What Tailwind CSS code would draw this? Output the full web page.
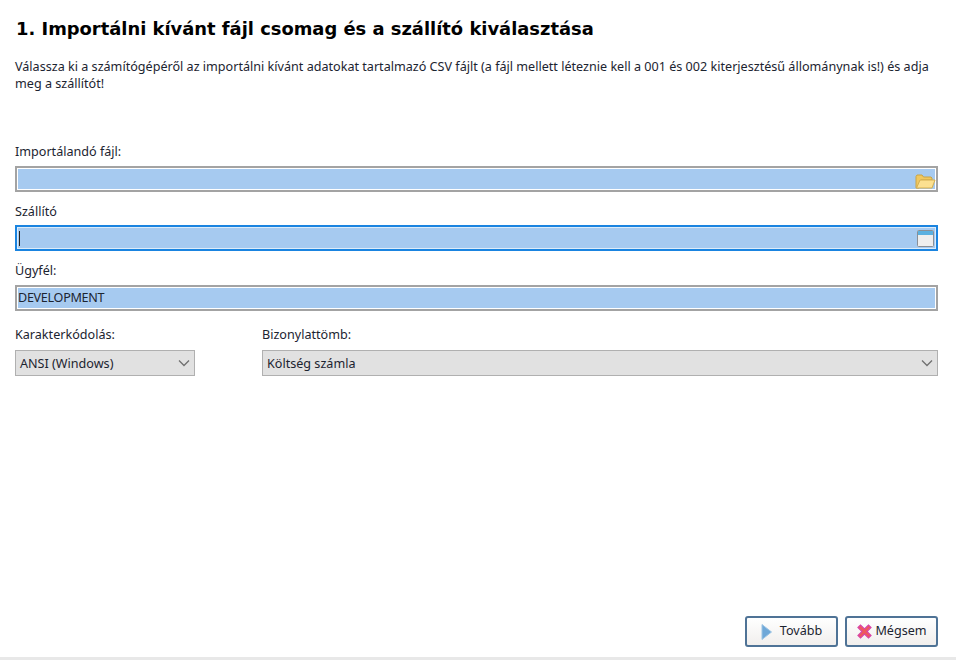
<!DOCTYPE html>
<html lang="hu">
<head>
    <meta charset="UTF-8">
    <title>Import</title>
    <script src="https://cdn.jsdelivr.net/npm/@tailwindcss/browser@4"></script>
</head>
<body class="w-[956px] h-[660px] overflow-hidden bg-white font-['Noto_Sans',sans-serif] text-[12.6px] text-[#1c2430]">
    <div class="h-[657px] flex flex-col pl-[15px] pr-[18px]">
        <h1 class="mt-[17px] ml-[1px] h-[24px] leading-[24px] font-['DejaVu_Sans',sans-serif] font-bold text-[17.9px] text-black whitespace-nowrap">1. Importálni kívánt fájl csomag és a szállító kiválasztása</h1>
        <p class="mt-[17px] w-[923px] leading-[17px]">Válassza ki a számítógépéről az importálni kívánt adatokat tartalmazó CSV fájlt (a fájl mellett léteznie kell a 001 és 002 kiterjesztésű állománynak is!) és adja meg a szállítót!</p>

        <label class="mt-[50px] h-[17px] pt-px leading-[17px]">Importálandó fájl:</label>
        <div class="mt-[7px] w-[923px] h-[26px] flex items-end justify-end border-2 border-[#a3a3a3] bg-[#a6caf0] shadow-[inset_0_0_0_1px_#fff] pb-[1px]">
            <svg width="21" height="15" viewBox="0 0 21 15">
                <path d="M1 14V2.500L2 1h5l1.500 2H16l1 1v2H6L4 14z" fill="#f0c860" stroke="#c9a445"/>
                <path d="M1.500 14L5 6h15l-3 8z" fill="#fbe090" stroke="#d4ae50"/>
            </svg>
        </div>
        <label class="mt-[11px] h-[17px] leading-[17px]">Szállító</label>
        <div class="mt-[5px] w-[923px] h-[26px] flex items-center justify-between border-2 border-[#1a84e0] bg-[#a6caf0] shadow-[inset_0_0_0_1px_#dcecfa] pl-[2px] pr-[2px]">
            <span class="w-px h-[15px] bg-[#222]"></span>
            <svg width="17" height="17" viewBox="0 0 17 17">
                <rect x="0.500" y="0.500" width="16" height="16" rx="1" fill="#eeeeee" stroke="#8a8f96"/>
                <rect x="1" y="1" width="15" height="4" fill="#5ab0e0"/>
            </svg>
        </div>
        <label class="mt-[11px] h-[17px] leading-[17px]">Ügyfél:</label>
        <div class="mt-[6px] w-[923px] h-[26px] flex items-center border-2 border-[#a3a3a3] bg-[#a6caf0] shadow-[inset_0_0_0_1px_#fff] pl-[1px] tracking-[-0.3px]">DEVELOPMENT</div>

        <div class="mt-[15px] flex gap-[67px]">
            <div class="w-[180px]">
                <label class="block h-[17px] leading-[17px]">Karakterkódolás:</label>
                <div class="mt-[7px] h-[26px] flex items-center justify-between border border-[#b0b0b0] bg-[#e1e1e1] pl-[4px] pr-[4px]">
                    <span class="pt-[2px]">ANSI (Windows)</span>
                    <svg width="12" height="8" viewBox="0 0 12 8"><path d="M1 1.500l5 5 5-5" fill="none" stroke="#707070" stroke-width="1.300"/></svg>
                </div>
            </div>
            <div class="w-[676px]">
                <label class="block h-[17px] leading-[17px]">Bizonylattömb:</label>
                <div class="mt-[7px] h-[26px] flex items-center justify-between border border-[#b0b0b0] bg-[#e1e1e1] pl-[4px] pr-[4px]">
                    <span class="pt-[2px]">Költség számla</span>
                    <svg width="12" height="8" viewBox="0 0 12 8"><path d="M1 1.500l5 5 5-5" fill="none" stroke="#707070" stroke-width="1.300"/></svg>
                </div>
            </div>
        </div>

        <div class="mt-auto mb-[10px] flex justify-end gap-[7px]">
            <button class="w-[93px] h-[31px] flex items-center justify-center gap-[8px] rounded-[3px] border-2 border-[#4f7396] bg-gradient-to-b from-white to-[#f1efed]">
                <svg width="11" height="16" viewBox="0 0 11 16"><path d="M1 0.500L10.500 8 1 15.500z" fill="#6fa8d8" stroke="#9cc4e4"/></svg>
                <span>Tovább</span>
            </button>
            <button class="w-[93px] h-[31px] flex items-center justify-center gap-[2px] rounded-[3px] border-2 border-[#4f7396] bg-gradient-to-b from-white to-[#f1efed]">
                <svg width="17" height="17" viewBox="0 0 17 17"><path d="M2 4.500L4.500 2 8.500 6 12.500 2 15 4.500 11 8.500 15 12.500 12.500 15 8.500 11 4.500 15 2 12.500 6 8.500z" fill="#ee5a5a" stroke="#d844a8" stroke-width="1.200"/></svg>
                <span>Mégsem</span>
            </button>
        </div>
    </div>
    <div class="h-[3px] bg-[#e8e8e8]"></div>
</body>
</html>
